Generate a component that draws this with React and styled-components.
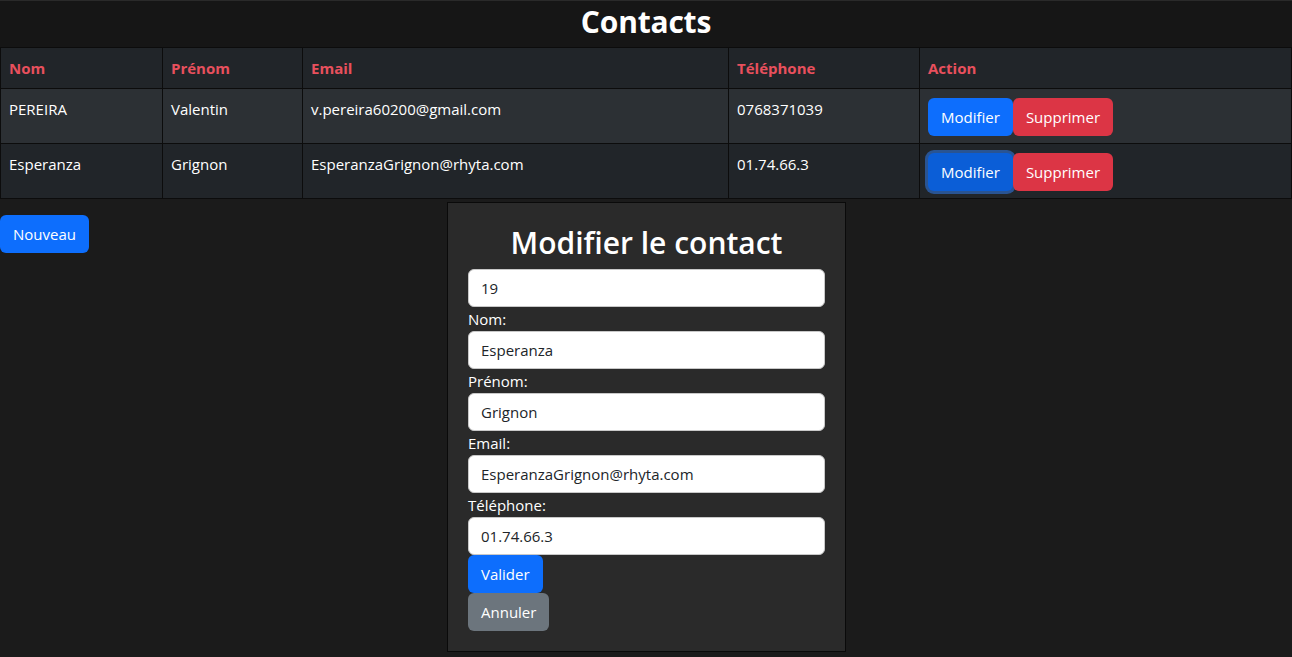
import React from 'react'
import styled, { createGlobalStyle, css } from 'styled-components';

const GlobalStyle = createGlobalStyle`
  * { box-sizing: border-box; }
  body {
    margin: 0;
    background-color: #1b1b1b;
    color: #fff;
    font-family: "Open Sans", "Noto Sans", sans-serif;
    font-size: 16px;
    line-height: 1.5;
  }
`

const Header = styled.header`
  background-color: #161616;
  height: 47px;
  display: flex;
  align-items: center;
  justify-content: center;
  padding-bottom: 5px;
  border-top: 1px solid #2a2a2a;
`
const Title = styled.h1`
  margin: 0;
  font-size: 30px;
  font-weight: 700;
  line-height: 1.2;
  letter-spacing: -0.2px;
`

const Table = styled.table`
  width: 100%;
  border-collapse: collapse;
  border: 1px solid #0c0c0c;
`
const Th = styled.th`
  text-align: left;
  color: #e8505d;
  font-weight: 700;
  font-size: 15px;
  padding: 8px;
  height: 41px;
  background-color: #212529;
  border: 1px solid #0c0c0c;
  width: ${({ w }) => w || 'auto'};
`
const Td = styled.td`
  vertical-align: top;
  padding: 9px 8px 7px;
  height: 55px;
  font-size: 15px;
  background-color: ${({ striped }) => (striped ? '#2c3034' : '#212529')};
  border: 1px solid #0c0c0c;
`
const Actions = styled.div`
  display: flex;
`

const Button = styled.button`
  font-family: inherit;
  font-size: 15px;
  line-height: 24px;
  height: 38px;
  color: #fff;
  border: 1px solid transparent;
  border-radius: 6px;
  padding: 6px 12px;
  cursor: pointer;
  background-color: ${({ variant }) =>
    variant === 'danger' ? '#dc3545' : variant === 'secondary' ? '#6c757d' : '#0d6efd'};
  ${({ focused }) =>
    focused &&
    css`
      background-color: #0b5ed7;
      box-shadow: 0 0 0 3px rgba(49, 132, 253, 0.5);
    `}
`

const Below = styled.div`
  display: grid;
  grid-template-columns: 1fr 400px 1fr;
  align-items: start;
`
const NewButton = styled(Button)`
  justify-self: start;
  margin-top: 16px;
`

const Panel = styled.form`
  margin: 3px 0 0 1px;
  background-color: #2a2a2a;
  border: 1px solid #0a0a0a;
  padding: 22px 20px 20px;
  display: flex;
  flex-direction: column;
  align-items: flex-start;
`
const PanelTitle = styled.h2`
  align-self: stretch;
  text-align: center;
  margin: 0 0 8px;
  font-size: 30px;
  font-weight: 600;
  line-height: 1.2;
`
const Label = styled.label`
  font-size: 15px;
  line-height: 24px;
`
const Input = styled.input`
  width: 100%;
  height: 38px;
  font-family: inherit;
  font-size: 15px;
  color: #212529;
  background-color: #fff;
  border: 1px solid #c8c8c8;
  border-radius: 6px;
  padding: 6px 12px;
  outline: none;
`

const contacts = [
  { nom: 'PEREIRA', prenom: 'Valentin', email: 'v.pereira60200@gmail.com', tel: '0768371039' },
  { nom: 'Esperanza', prenom: 'Grignon', email: 'EsperanzaGrignon@rhyta.com', tel: '01.74.66.3' },
]

export default function App() {
  return (
    <>
      <GlobalStyle />
      <Header>
        <Title>Contacts</Title>
      </Header>
      <Table>
        <thead>
          <tr>
            <Th w="162px">Nom</Th>
            <Th w="140px">Prénom</Th>
            <Th w="426px">Email</Th>
            <Th w="191px">Téléphone</Th>
            <Th>Action</Th>
          </tr>
        </thead>
        <tbody>
          {contacts.map((c, i) => (
            <tr key={c.email}>
              <Td striped={i === 0}>{c.nom}</Td>
              <Td striped={i === 0}>{c.prenom}</Td>
              <Td striped={i === 0}>{c.email}</Td>
              <Td striped={i === 0}>{c.tel}</Td>
              <Td striped={i === 0}>
                <Actions>
                  <Button type="button" focused={i === 1}>Modifier</Button>
                  <Button type="button" variant="danger">Supprimer</Button>
                </Actions>
              </Td>
            </tr>
          ))}
        </tbody>
      </Table>
      <Below>
        <NewButton type="button">Nouveau</NewButton>
        <Panel onSubmit={(e) => e.preventDefault()}>
          <PanelTitle>Modifier le contact</PanelTitle>
          <Input defaultValue="19" readOnly />
          <Label>Nom:</Label>
          <Input defaultValue="Esperanza" />
          <Label>Prénom:</Label>
          <Input defaultValue="Grignon" />
          <Label>Email:</Label>
          <Input defaultValue="EsperanzaGrignon@rhyta.com" />
          <Label>Téléphone:</Label>
          <Input defaultValue="01.74.66.3" />
          <Button type="submit">Valider</Button>
          <Button type="button" variant="secondary">Annuler</Button>
        </Panel>
        <div />
      </Below>
    </>
  )
}
